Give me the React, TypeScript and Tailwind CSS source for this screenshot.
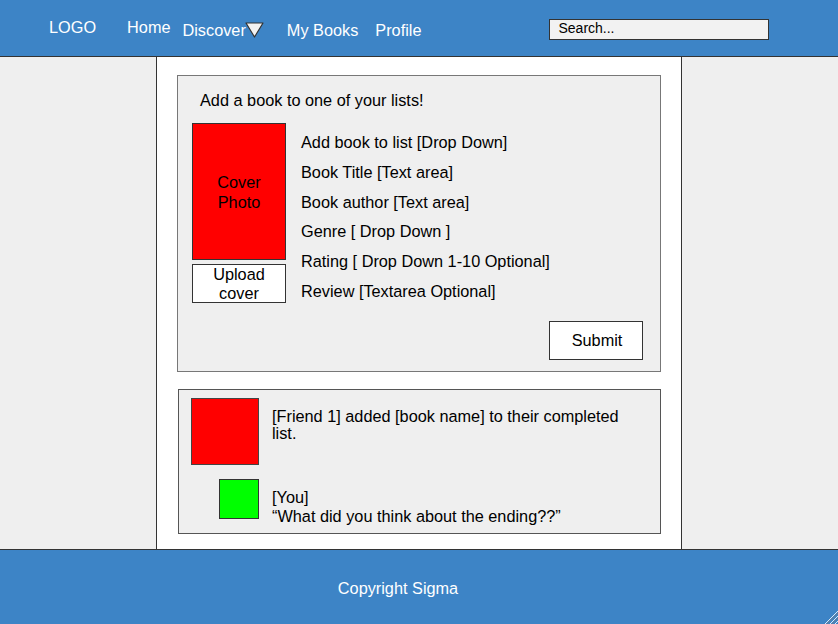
const font = { fontFamily: '"Liberation Sans", Arial, sans-serif' }

function NavTriangle() {
  return (
    <svg width="19" height="16" viewBox="0 0 19 16" className="shrink-0">
      <polygon points="1,1 18,1 9.5,15" fill="#f2f2f2" stroke="#333" strokeWidth="1.2" strokeLinejoin="round" />
    </svg>
  )
}

function Header() {
  return (
    <div className="flex h-[57px] items-start border-b border-[#333] bg-[#3d84c6] text-[16.3px] leading-[19px] text-white">
      <span className="ml-[49px] pt-[18px]">LOGO</span>
      <span className="ml-[31px] pt-[18px]">Home</span>
      <div className="ml-[12px] flex items-start pt-[21px]">
        <span>Discover</span>
        <div className="-ml-[1px] mt-[1px]">
          <NavTriangle />
        </div>
      </div>
      <span className="ml-[23px] pt-[21px]">My Books</span>
      <span className="ml-[17px] pt-[21px]">Profile</span>
      <div className="ml-[128px] mt-[19px] h-[21px] w-[220px] border border-[#333] bg-[#f2f2f2] px-[8px] pt-[1px] text-[14px] leading-[15px] text-black">
        Search...
      </div>
    </div>
  )
}

const fields = [
  'Add book to list [Drop Down]',
  'Book Title [Text area]',
  'Book author [Text area]',
  'Genre [ Drop Down ]',
  'Rating [ Drop Down 1-10 Optional]',
  'Review [Textarea Optional]',
]

function AddBookCard() {
  return (
    <div className="flex h-[297px] flex-col border border-[#777] bg-[#efefef] pl-[14px] pr-[17px] pt-[15px]">
      <p className="pl-[8px]">Add a book to one of your lists!</p>
      <div className="mt-[13px] flex">
        <div className="flex w-[94px] shrink-0 flex-col">
          <div className="flex h-[137px] flex-col items-center justify-center border border-[#333] bg-[#ff0000] text-center leading-[20px] text-black">
            <span>Cover</span>
            <span>Photo</span>
          </div>
          <div className="mt-[4px] flex h-[39px] flex-col items-center justify-center border border-[#333] bg-white text-center">
            <span>Upload</span>
            <span>cover</span>
          </div>
        </div>
        <div className="ml-[15px] flex flex-col gap-[10.8px] pt-[10px]">
          {fields.map(f => (
            <span key={f}>{f}</span>
          ))}
        </div>
      </div>
      <div className="mt-[18px] flex justify-end">
        <button className="h-[39px] w-[94px] border border-[#333] bg-white pl-[2px]">Submit</button>
      </div>
    </div>
  )
}

function ActivityCard() {
  return (
    <div className="ml-[1px] h-[145px] border border-[#555] bg-[#efefef] pl-[12px] pt-[8px]">
      <div className="flex">
        <div className="h-[67px] w-[68px] shrink-0 border border-[#444] bg-[#ff0000]" />
        <p className="ml-[13px] mt-[10px] w-[366px] leading-[17px]">
          [Friend 1] added [book name] to their completed list.
        </p>
      </div>
      <div className="mt-[13px] flex pl-[28px]">
        <div className="mt-[1px] h-[40px] w-[40px] shrink-0 border border-[#333] bg-[#00ff00]" />
        <div className="ml-[13px] mt-[10px] flex flex-col">
          <span>[You]</span>
          <span>“What did you think about the ending??”</span>
        </div>
      </div>
    </div>
  )
}

function ResizeGrip() {
  return (
    <svg width="14" height="14" viewBox="0 0 14 14" className="absolute bottom-0 right-0">
      <line x1="14" y1="1" x2="1" y2="14" stroke="#dfe8f2" strokeWidth="1" />
      <line x1="14" y1="3" x2="3" y2="14" stroke="#6b7d90" strokeWidth="1" />
      <line x1="14" y1="6" x2="6" y2="14" stroke="#dfe8f2" strokeWidth="1" />
      <line x1="14" y1="8" x2="8" y2="14" stroke="#6b7d90" strokeWidth="1" />
      <line x1="14" y1="11" x2="11" y2="14" stroke="#dfe8f2" strokeWidth="1" />
    </svg>
  )
}

export default function App() {
  return (
    <div className="flex h-[624px] w-[838px] flex-col overflow-hidden bg-[#efefef] text-[16.3px] leading-[19px] text-black" style={font}>
      <Header />
      <div className="mx-auto flex h-[492px] w-[526px] flex-col border-x border-[#333] bg-white px-[20px] pt-[18px]">
        <AddBookCard />
        <div className="mt-[17px]">
          <ActivityCard />
        </div>
      </div>
      <div className="relative flex flex-1 items-center justify-center border-t border-[#333] bg-[#3d84c6] pr-[42px] text-white">
        <span className="mt-[3px]">Copyright Sigma</span>
        <ResizeGrip />
      </div>
    </div>
  )
}
